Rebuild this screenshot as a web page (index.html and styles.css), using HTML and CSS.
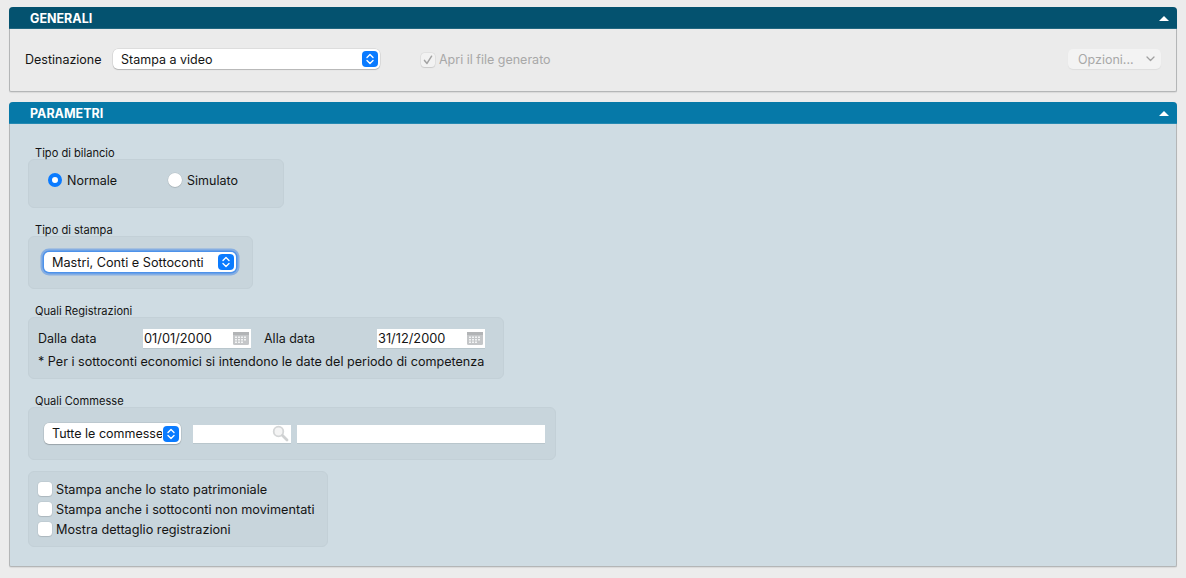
FILE: index.html
```html
<!DOCTYPE html>
<html lang="it">
<head>
<meta charset="utf-8">
<title>Bilancio</title>
<link rel="stylesheet" href="styles.css">
</head>
<body>
<section class="panel panel-generali">
  <header class="panel-head head-dark"><span>GENERALI</span><i class="tri"></i></header>
  <div class="generali-body">
    <span class="dest-label">Destinazione</span>
    <div class="select select-dest"><span class="select-text">Stampa a video</span>
      <span class="stepper"><svg width="8" height="12" viewBox="0 0 8 12"><path d="M1 4.6 4 1.6 7 4.6M1 7.4 4 10.4 7 7.4" fill="none" stroke="#fff" stroke-width="1.4" stroke-linecap="round" stroke-linejoin="round"/></svg></span></div>
    <div class="apri"><span class="check check-disabled"><svg width="10" height="10" viewBox="0 0 10 10"><path d="M1.5 5.4 4 8.4 8.6 1.2" fill="none" stroke="#a3a3a3" stroke-width="1.5" stroke-linecap="round" stroke-linejoin="round"/></svg></span><span>Apri il file generato</span></div>
    <div class="opzioni"><span>Opzioni...</span><svg width="9" height="6" viewBox="0 0 9 6"><path d="M1 1 4.5 4.5 8 1" fill="none" stroke="#a0a0a0" stroke-width="1.3" stroke-linecap="round" stroke-linejoin="round"/></svg></div>
  </div>
</section>

<section class="panel panel-parametri">
  <header class="panel-head head-blue"><span>PARAMETRI</span><i class="tri"></i></header>
  <div class="parametri-body">
    <div class="group-title">Tipo di bilancio</div>
    <div class="group group-bilancio">
      <label class="radio-item radio-normale"><span class="radio radio-on"></span>Normale</label>
      <label class="radio-item"><span class="radio"></span>Simulato</label>
    </div>

    <div class="group-title">Tipo di stampa</div>
    <div class="group group-stampa">
      <div class="select select-focus"><span class="select-text">Mastri, Conti e Sottoconti</span>
        <span class="stepper"><svg width="8" height="12" viewBox="0 0 8 12"><path d="M1 4.6 4 1.6 7 4.6M1 7.4 4 10.4 7 7.4" fill="none" stroke="#fff" stroke-width="1.4" stroke-linecap="round" stroke-linejoin="round"/></svg></span></div>
    </div>

    <div class="group-title">Quali Registrazioni</div>
    <div class="group group-reg">
      <div class="date-row">
        <span class="date-label">Dalla data</span>
        <div class="field date-field"><span>01/01/2000</span>
          <svg class="cal" width="16" height="13" viewBox="0 0 16 13"><rect width="16" height="13" rx="1.5" fill="#c4c6c8"/><rect x="0" y="0" width="16" height="3" fill="#b2b4b6"/><g fill="#f2f3f4"><rect x="2" y="4.5" width="2" height="1.5"/><rect x="5" y="4.5" width="2" height="1.5"/><rect x="8" y="4.5" width="2" height="1.5"/><rect x="11" y="4.5" width="2" height="1.5"/><rect x="2" y="7" width="2" height="1.5"/><rect x="5" y="7" width="2" height="1.5"/><rect x="8" y="7" width="2" height="1.5"/><rect x="11" y="7" width="2" height="1.5"/><rect x="2" y="9.5" width="2" height="1.5"/><rect x="5" y="9.5" width="2" height="1.5"/><rect x="8" y="9.5" width="2" height="1.5"/></g></svg></div>
        <span class="date-label date-label-2">Alla data</span>
        <div class="field date-field"><span>31/12/2000</span>
          <svg class="cal" width="16" height="13" viewBox="0 0 16 13"><rect width="16" height="13" rx="1.5" fill="#c4c6c8"/><rect x="0" y="0" width="16" height="3" fill="#b2b4b6"/><g fill="#f2f3f4"><rect x="2" y="4.5" width="2" height="1.5"/><rect x="5" y="4.5" width="2" height="1.5"/><rect x="8" y="4.5" width="2" height="1.5"/><rect x="11" y="4.5" width="2" height="1.5"/><rect x="2" y="7" width="2" height="1.5"/><rect x="5" y="7" width="2" height="1.5"/><rect x="8" y="7" width="2" height="1.5"/><rect x="11" y="7" width="2" height="1.5"/><rect x="2" y="9.5" width="2" height="1.5"/><rect x="5" y="9.5" width="2" height="1.5"/><rect x="8" y="9.5" width="2" height="1.5"/></g></svg></div>
      </div>
      <div class="note">* Per i sottoconti economici si intendono le date del periodo di competenza</div>
    </div>

    <div class="group-title">Quali Commesse</div>
    <div class="group group-comm">
      <div class="select select-comm"><span class="select-text">Tutte le commesse</span>
        <span class="stepper"><svg width="8" height="12" viewBox="0 0 8 12"><path d="M1 4.6 4 1.6 7 4.6M1 7.4 4 10.4 7 7.4" fill="none" stroke="#fff" stroke-width="1.4" stroke-linecap="round" stroke-linejoin="round"/></svg></span></div>
      <div class="field search-field"><svg width="17" height="17" viewBox="0 0 17 17"><circle cx="6.5" cy="6.5" r="4.8" fill="#f4f4f4" stroke="#d4d6d7" stroke-width="1.8"/><path d="M10.5 10.5 15 15" stroke="#cfd1d2" stroke-width="2.8" stroke-linecap="round"/></svg></div>
      <div class="field desc-field"></div>
    </div>

    <div class="group group-checks">
      <label class="check-item"><span class="check"></span>Stampa anche lo stato patrimoniale</label>
      <label class="check-item"><span class="check"></span>Stampa anche i sottoconti non movimentati</label>
      <label class="check-item"><span class="check"></span>Mostra dettaglio registrazioni</label>
    </div>
  </div>
</section>
</body>
</html>
```

FILE: styles.css
```css
* { box-sizing: border-box; }
html, body { height: 100%; }
body {
  margin: 0;
  padding: 7px 9px 0;
  background: #ececec;
  font-family: "Inter", "Liberation Sans", sans-serif;
  font-size: 12.5px;
  color: #141414;
  overflow: hidden;
}
.panel {
  border-radius: 4px 4px 2px 2px;
  border: 1px solid #b4b6b7;
  border-top: 0;
  box-shadow: 0 1px 1px rgba(0,0,0,.08);
}
.panel-generali { height: 85px; background: #ebebeb; }
.panel-parametri { height: 465px; margin-top: 10px; background: #cfdce3; }
.panel-head {
  height: 22px;
  margin: 0 -1px;
  padding: 2px 8px 0 21px;
  display: flex;
  align-items: center;
  justify-content: space-between;
  border-radius: 4px 4px 0 0;
  color: #fff;
  font-weight: 700;
  font-size: 12.5px;
  border-bottom: 1px solid rgba(255,255,255,.12);
}
.head-dark { background: #04526f; }
.head-blue { background: #0679a8; }
.tri {
  width: 0; height: 0;
  border-left: 5px solid transparent;
  border-right: 5px solid transparent;
  border-bottom: 5px solid #fff;
}
.generali-body {
  display: flex;
  align-items: center;
  padding: 20px 15px 0 15px;
}
.dest-label { width: 88px; margin-top: 1px; }
.select {
  display: flex;
  align-items: center;
  justify-content: space-between;
  background: #fff;
  border-radius: 5px;
  box-shadow: 0 0 0 .5px rgba(0,0,0,.12), 0 1px 1px rgba(0,0,0,.18);
  height: 20px;
  padding: 0 2px 0 8px;
}
.select-text { white-space: nowrap; overflow: hidden; flex: 1; }
.stepper {
  flex: none;
  width: 16px; height: 16px;
  border-radius: 4px;
  background: #0a7bff;
  display: flex; align-items: center; justify-content: center;
}
.select-dest { width: 267px; }
.apri {
  display: flex;
  align-items: center;
  gap: 4px;
  margin-left: 41px;
  margin-top: 1px;
  color: #a8a8a8;
}
.check {
  width: 14px; height: 14px;
  flex: none;
  background: #fff;
  border-radius: 3.5px;
  box-shadow: 0 0 0 .5px rgba(0,0,0,.08), 0 1px 1px rgba(0,0,0,.1);
  display: flex; align-items: center; justify-content: center;
}
.check-disabled { background: #f2f2f2; }
.opzioni {
  margin-left: auto;
  width: 93px;
  height: 20px;
  padding: 0 6px 0 10px;
  display: flex;
  align-items: center;
  justify-content: space-between;
  background: #f3f3f3;
  border-radius: 5px;
  color: #a8a8a8;
  box-shadow: 0 1px 1px rgba(0,0,0,.06);
}
.parametri-body {
  padding: 21px 0 0 18px;
}
.group-title {
  height: 14px;
  line-height: 16px;
  padding-left: 7px;
  font-size: 11.1px;
}
.group {
  background: #c8d5dc;
  border: 1px solid #c3d0d7;
  border-radius: 6px;
  margin-bottom: 14px;
}
.group-bilancio {
  width: 256px; height: 49px;
  display: flex;
  align-items: flex-start;
  padding: 12px 0 0 19px;
}
.radio-item { display: flex; align-items: center; gap: 5px; height: 16px; }
.radio-normale { width: 120px; }
.radio {
  width: 14px; height: 14px;
  border-radius: 50%;
  background: #fff;
  box-shadow: 0 0 0 .5px rgba(0,0,0,.1), 0 1px 1px rgba(0,0,0,.1);
}
.radio-on { background: #fff; border: 4px solid #0a7bff; box-shadow: none; }
.group-stampa {
  width: 225px; height: 53px;
  padding: 15px 0 0 15px;
}
.select-focus {
  width: 192px;
  height: 20px;
  padding-left: 8px;
  font-size: 12.7px;
  box-shadow: 0 0 0 1.5px #4d92ea, 0 0 0 3.5px #86aee2;
}
.group-reg {
  width: 476px; height: 62px;
  padding: 10px 0 0 9px;
}
.date-row { display: flex; align-items: center; height: 20px; }
.date-label { width: 105px; }
.date-label-2 { width: 113px; margin-left: 13px; }
.field { background: #fff; box-shadow: 0 1px 0 rgba(0,0,0,.07); }
.date-field {
  width: 108px; height: 19px;
  padding: 0 2px 0 1px;
  display: flex;
  align-items: center;
  justify-content: space-between;
  font-size: 12.8px;
}
.note { margin-top: 5px; line-height: 17px; font-size: 12.6px; }
.group-comm {
  width: 528px; height: 53px;
  display: flex;
  align-items: center;
  padding: 0 10px 0 15px;
}
.select-comm { width: 137px; height: 21px; padding-left: 8px; margin-right: 12px; }
.select-comm .select-text { margin-right: 1px; }
.search-field {
  width: 98px; height: 18px;
  margin-right: 6px;
  display: flex;
  align-items: center;
  justify-content: flex-end;
  padding-right: 2px;
}
.desc-field { width: 248px; height: 18px; }
.group-checks {
  margin: -3px 0 0;
  width: 300px; height: 76px;
  padding: 9px 0 0 9px;
  display: flex;
  flex-direction: column;
  gap: 4px;
  font-size: 12.7px;
}
.check-item { display: flex; align-items: center; gap: 4px; height: 16px; }
```
